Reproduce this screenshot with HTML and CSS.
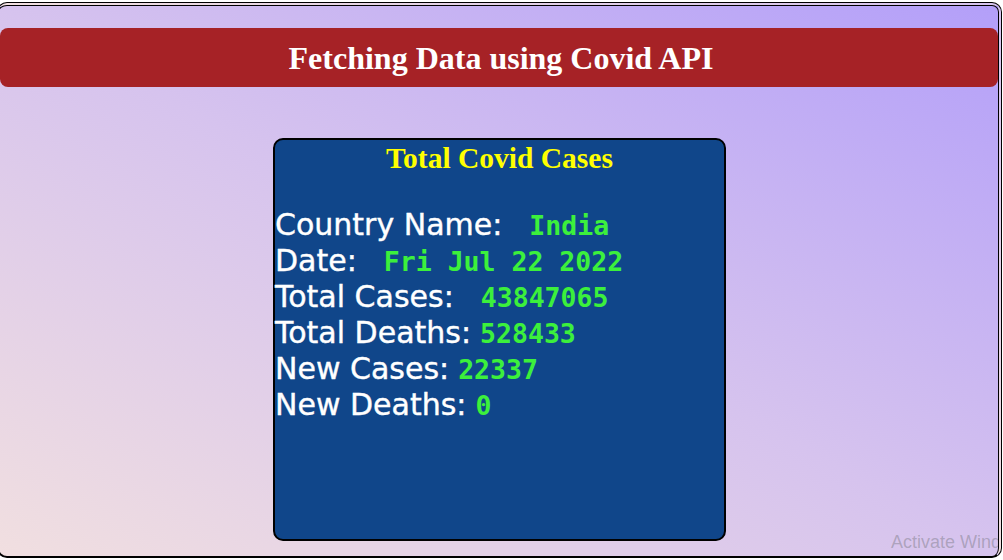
FILE: index.html
```html
<!DOCTYPE html>
<html>
<head>
<meta charset="utf-8">
<link rel="stylesheet" href="styles.css">
</head>
<body>
<div class="page">
  <h1 class="header">Fetching Data using Covid API</h1>
  <div class="card">
    <h2 class="card-title">Total Covid Cases</h2>
    <div class="rows">
      <div class="row"><span class="label">Country Name:</span><span class="value wide">India</span></div>
      <div class="row"><span class="label">Date:</span><span class="value wide">Fri Jul 22 2022</span></div>
      <div class="row"><span class="label">Total Cases:</span><span class="value wide">43847065</span></div>
      <div class="row"><span class="label">Total Deaths:</span><span class="value">528433</span></div>
      <div class="row"><span class="label">New Cases:</span><span class="value">22337</span></div>
      <div class="row"><span class="label">New Deaths:</span><span class="value">0</span></div>
    </div>
  </div>
  <div class="watermark">Activate Windows<br>Go to Settings to activate Windows.</div>
</div>
</body>
</html>
```
FILE: styles.css
```css
html, body {
  margin: 0;
  padding: 0;
  overflow: hidden;
  background: #fff;
}
.page {
  position: relative;
  box-sizing: border-box;
  height: 556px;
  margin: 2px 1px 0 -3px;
  border-top: 4px double #000;
  border-right: 4px double #000;
  border-bottom: 2px solid #000;
  border-left: 2px solid #000;
  border-radius: 10px;
  background: linear-gradient(to top right, #f1dfe0 0%, #d6c3ee 50%, #b39ff9 100%);
  padding-top: 22px;
  padding-left: 2px;
  overflow: hidden;
}
.header {
  margin: 0 0 51px -1px;
  height: 59px;
  background: #a62226;
  border-radius: 8px;
  color: #fff;
  font-family: "Liberation Serif", "Times New Roman", serif;
  font-weight: bold;
  font-size: 32px;
  line-height: 61px;
  text-align: center;
  padding-left: 4px;
}
.card {
  box-sizing: border-box;
  width: 453px;
  height: 403px;
  margin: 0 auto;
  background: #10468a;
  border: 2px solid #000;
  border-radius: 10px;
}
.card-title {
  margin: 0;
  padding-top: 2px;
  color: #ffff00;
  font-family: "Liberation Serif", "Times New Roman", serif;
  font-weight: bold;
  font-size: 29.5px;
  line-height: 33px;
  text-align: center;
}
.rows {
  margin-top: 32px;
}
.row {
  height: 36px;
  line-height: 36px;
  white-space: nowrap;
}
.label {
  color: #fff;
  font-family: "DejaVu Sans", sans-serif;
  font-size: 30px;
  -webkit-text-stroke: 0.4px #fff;
}
.value {
  color: #3cf03c;
  font-family: "DejaVu Sans Mono", monospace;
  font-weight: bold;
  font-size: 26.5px;
  margin-left: 9px;
}
.value.wide {
  margin-left: 27px;
}
.watermark {
  position: absolute;
  left: 892px;
  top: 524px;
  color: rgba(120, 120, 130, 0.45);
  font-family: "Liberation Sans", Arial, sans-serif;
  font-size: 18px;
  line-height: 24px;
  white-space: nowrap;
}
```
